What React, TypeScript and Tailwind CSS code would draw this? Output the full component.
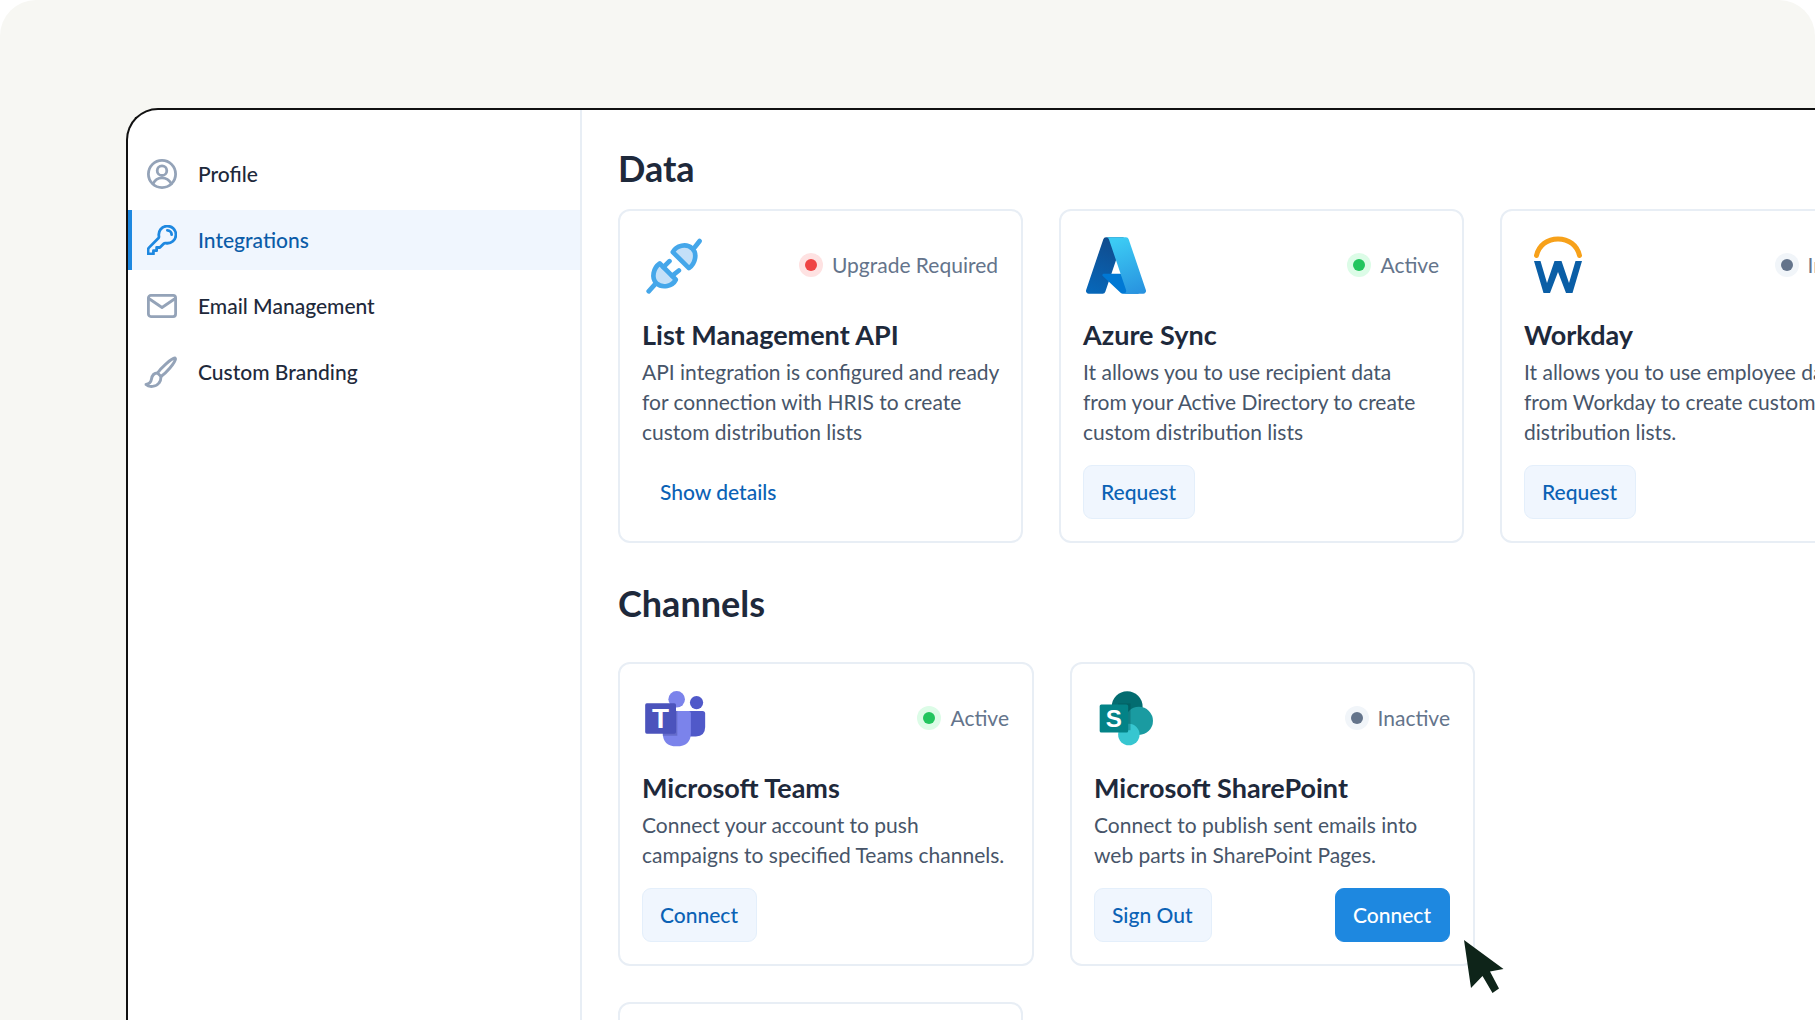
import React from "react";

const Profile = () => (
  <svg width="30" height="30" viewBox="0 0 30 30" fill="none" stroke="#94a3b8" strokeWidth="2.8" strokeLinecap="round">
    <circle cx="15" cy="15" r="13.6" />
    <circle cx="15" cy="11.7" r="4.8" />
    <path d="M6 24.8C8 20.5 11 18.8 15 18.8S22 20.5 24.5 24.8" />
  </svg>
);
const Key = () => (
  <svg width="30" height="30" viewBox="1.5 1.5 21 21" fill="none" stroke="#1e88e0" strokeWidth="1.95" strokeLinecap="round" strokeLinejoin="round">
    <path d="M15.75 5.25a3 3 0 0 1 3 3m3 0a6 6 0 0 1-7.029 5.912c-.563-.097-1.159.026-1.563.43L10.5 17.25H8.25v2.25H6v2.25H2.25v-2.818c0-.597.237-1.17.659-1.591l6.499-6.499c.404-.404.527-1 .43-1.563A6 6 0 1 1 21.75 8.25Z" />
  </svg>
);
const Mail = () => (
  <svg width="30" height="24" viewBox="0 0 30 24" fill="none" stroke="#94a3b8" strokeWidth="2.8" strokeLinejoin="round" strokeLinecap="round">
    <rect x="1.4" y="1.4" width="27.2" height="21.2" rx="2.5" />
    <path d="M1.8 4.5L15 13.5L28.2 4.5" />
  </svg>
);
const Brush = () => (
  <svg className="mr-[3px] shrink-0" width="33" height="33" viewBox="0 0 33 33" fill="none" stroke="#94a3b8" strokeWidth="2.9" strokeLinejoin="round" strokeLinecap="round">
    <path d="M31 2C27 2.5 17 12 13.5 17L17 20.5C22 17 31 7 31.5 3Z" />
    <path d="M13.5 17C9 17 8 20 7.5 23C7 26 5 28 2 28.5C5 31.5 12 31 15 27C17 24.5 17 22 17 20.5" />
  </svg>
);

const Plug = () => (
  <svg className="ml-[4px]" width="57" height="57" viewBox="50 50 170 170" fill="none" strokeLinecap="round" strokeLinejoin="round">
    <g stroke="#45a7ea" strokeWidth="14">
      <path d="M130 95C140 75 170 68 188 84C204 100 197 130 178 143Z" fill="#c4e0f8" />
      <path d="M196 80L210 62" />
      <path d="M139 177C129 197 99 204 81 188C65 172 72 142 91 129Z" fill="#c4e0f8" />
      <path d="M102 140L120 122M128 166L148 150M76 192L58 212" />
    </g>
  </svg>
);

const Azure = () => (
  <svg className="ml-[3px]" width="60" height="57" viewBox="4 6.5 88 83">
    <defs>
      <linearGradient id="az-a" x1="42" y1="6" x2="8" y2="92" gradientUnits="userSpaceOnUse">
        <stop stopColor="#114a8b" />
        <stop offset="1" stopColor="#0669bc" />
      </linearGradient>
      <linearGradient id="az-c" x1="46" y1="12" x2="76" y2="92" gradientUnits="userSpaceOnUse">
        <stop stopColor="#3ccbf4" />
        <stop offset="1" stopColor="#2892df" />
      </linearGradient>
    </defs>
    <path d="M33.338 6.544h26.038l-27.03 80.087a4.152 4.152 0 0 1-3.933 2.824H8.149a4.145 4.145 0 0 1-3.928-5.47L29.404 9.368a4.152 4.152 0 0 1 3.934-2.825z" fill="url(#az-a)" />
    <path d="M71.175 60.261h-41.29a1.911 1.911 0 0 0-1.305 3.309l26.532 24.764a4.171 4.171 0 0 0 2.846 1.121h23.38z" fill="#0078d4" />
    <path d="M66.595 9.364a4.145 4.145 0 0 0-3.928-2.82H33.648a4.146 4.146 0 0 1 3.928 2.82l25.184 74.62a4.146 4.146 0 0 1-3.928 5.472h29.02a4.146 4.146 0 0 0 3.927-5.472z" fill="url(#az-c)" />
  </svg>
);

const Workday = () => (
  <svg className="ml-[9px]" width="50" height="58" viewBox="0 0 50 58" fill="none">
    <path d="M3.5 19.5C6 9 14.5 3 25 3S44 9 46.5 19.5" stroke="#f7a11a" strokeWidth="5" strokeLinecap="round" />
    <path d="M1 25H7.5L14 47L21.5 25H28.5L36 47L42.5 25H49L39.5 57H33L25 36L17 57H10.5Z" fill="#0a5ea6" />
  </svg>
);

const Teams = () => (
  <svg className="ml-[2px]" width="63" height="57" viewBox="42 30 189 172">
    <circle cx="200" cy="68" r="20" fill="#5059c9" />
    <path d="M170 93H218Q226 93 226 101V142Q226 170 198 170H170Z" fill="#5059c9" />
    <circle cx="140" cy="58" r="25" fill="#7b83eb" />
    <path d="M104 93H176Q183 93 183 100V158Q183 200 140 200Q98 200 98 158V100Q98 93 104 93Z" fill="#7b83eb" />
    <path d="M98 93H142V168H98Z" fill="#3a3f8f" opacity="0.35" />
    <rect x="45" y="70" width="93" height="92" rx="5" fill="#4b53bc" />
    <text x="91" y="146" textAnchor="middle" fontFamily="'Liberation Sans',sans-serif" fontWeight="700" fontSize="84" fill="#ffffff">T</text>
  </svg>
);

const SharePoint = () => (
  <svg className="ml-[4px]" width="57" height="57" viewBox="40 30 170 170">
    <circle cx="127" cy="80" r="46" fill="#036c70" />
    <circle cx="162" cy="122" r="42" fill="#1a9ba1" />
    <circle cx="132" cy="163" r="32" fill="#37c6d0" />
    <path d="M100 70H137V150H100Z" fill="#024b4e" opacity="0.35" />
    <rect x="45" y="73" width="85" height="84" rx="5" fill="#038387" />
    <text x="87" y="141" textAnchor="middle" fontFamily="'Liberation Sans',sans-serif" fontWeight="700" fontSize="72" fill="#ffffff">S</text>
  </svg>
);

const Status = ({ tone, label }: { tone: "red" | "green" | "gray"; label: string }) => {
  const ring = tone === "red" ? "bg-[#fee2e2]" : tone === "green" ? "bg-[#dcfce7]" : "bg-[#f1f5f9]";
  const dot = tone === "red" ? "bg-[#ef4444]" : tone === "green" ? "bg-[#22c55e]" : "bg-[#64748b]";
  return (
    <div className="flex items-center gap-[9px]">
      <span className={"flex h-6 w-6 items-center justify-center rounded-full " + ring}>
        <span className={"h-3 w-3 rounded-full " + dot} />
      </span>
      <span className="whitespace-nowrap text-[21px] leading-[30px] text-[#64748b]">{label}</span>
    </div>
  );
};

const Btn = ({ kind = "soft", children }: { kind?: "soft" | "primary" | "ghost"; children: React.ReactNode }) => {
  const c =
    kind === "primary"
      ? "bg-[#1e88e0] text-white border-[#1e88e0]"
      : kind === "ghost"
        ? "bg-transparent text-[#0b62b5] border-transparent"
        : "bg-[#f0f6fe] text-[#0b62b5] border-[#e4effb]";
  return (
    <button className={"flex h-[54px] items-center rounded-[9px] border pl-[17px] pr-[18px] text-[21px] font-medium " + c}>
      {children}
    </button>
  );
};

const Card = ({
  w,
  icon,
  status,
  title,
  desc,
  actions,
}: {
  w: string;
  icon: React.ReactNode;
  status: React.ReactNode;
  title: string;
  desc: React.ReactNode;
  actions: React.ReactNode;
}) => (
  <div className={"flex shrink-0 flex-col rounded-[12px] border-2 border-[#e8eef5] bg-white pl-[22px] pr-[23px] pt-6 pb-[22px] " + w}>
    <div className="flex h-[60px] items-center justify-between">
      {icon}
      {status}
    </div>
    <h3 className="mt-[22px] whitespace-nowrap text-[27px] leading-[36px] font-bold text-[#1e293b]">{title}</h3>
    <p className="mt-1 whitespace-nowrap text-[21px] leading-[30px] text-[#475569]">{desc}</p>
    <div className="mt-[18px] flex items-center justify-between">{actions}</div>
  </div>
);

const NavItem = ({ icon, label, active }: { icon: React.ReactNode; label: string; active?: boolean }) => (
  <div
    className={
      "flex h-[60px] items-center gap-[21px] text-[21px] font-medium " +
      (active ? "border-l-4 border-[#1e88e0] bg-[#f0f6fe] pl-[15px] text-[#0b5ca8]" : "pl-[19px] text-[#1e293b]")
    }
  >
    <span className="flex w-[30px] shrink-0 justify-center">{icon}</span>
    {label}
  </div>
);

export default function App() {
  return (
    <div className="h-[1020px] w-full overflow-hidden bg-white font-[Lato,sans-serif]">
      <div className="h-full rounded-t-[36px] bg-[#f7f7f3] pl-[126px] pt-[108px]">
        <div className="flex h-[912px] w-[1800px] overflow-hidden rounded-tl-[32px] border-l-2 border-t-2 border-[#111111] bg-white">
          <aside className="flex w-[454px] shrink-0 flex-col gap-[6px] border-r-2 border-[#e8eef5] pt-[34px]">
            <NavItem icon={<Profile />} label="Profile" />
            <NavItem icon={<Key />} label="Integrations" active />
            <NavItem icon={<Mail />} label="Email Management" />
            <NavItem icon={<Brush />} label="Custom Branding" />
          </aside>
          <main className="min-w-0 flex-1 pl-9 pt-9">
            <h2 className="mb-[19px] text-[36px] leading-[44px] font-bold text-[#1e293b]">Data</h2>
            <div className="flex gap-9">
              <Card
                w="w-[405px]"
                icon={<Plug />}
                status={<Status tone="red" label="Upgrade Required" />}
                title="List Management API"
                desc={<>API integration is configured and ready<br />for connection with HRIS to create<br />custom distribution lists</>}
                actions={<Btn kind="ghost">Show details</Btn>}
              />
              <Card
                w="w-[405px]"
                icon={<Azure />}
                status={<Status tone="green" label="Active" />}
                title="Azure Sync"
                desc={<>It allows you to use recipient data<br />from your Active Directory to create<br />custom distribution lists</>}
                actions={<Btn>Request</Btn>}
              />
              <Card
                w="w-[405px]"
                icon={<Workday />}
                status={<Status tone="gray" label="Inactive" />}
                title="Workday"
                desc={<>It allows you to use employee data<br />from Workday to create custom<br />distribution lists.</>}
                actions={<Btn>Request</Btn>}
              />
            </div>
            <h2 className="mb-[37px] mt-[38px] text-[36px] leading-[44px] font-bold text-[#1e293b]">Channels</h2>
            <div className="flex gap-9">
              <Card
                w="w-[416px]"
                icon={<Teams />}
                status={<Status tone="green" label="Active" />}
                title="Microsoft Teams"
                desc={<>Connect your account to push<br />campaigns to specified Teams channels.</>}
                actions={<Btn>Connect</Btn>}
              />
              <div className="relative shrink-0">
                <Card
                  w="w-[405px]"
                  icon={<SharePoint />}
                  status={<Status tone="gray" label="Inactive" />}
                  title="Microsoft SharePoint"
                  desc={<>Connect to publish sent emails into<br />web parts in SharePoint Pages.</>}
                  actions={
                    <>
                      <Btn>Sign Out</Btn>
                      <Btn kind="primary">Connect</Btn>
                    </>
                  }
                />
                <svg className="absolute left-[393px] top-[277px]" width="42" height="56" viewBox="0 0 42 56">
                  <path d="M1 1L40.5 30L27 32.5L36 49.5L29.5 54L19.5 37L8 49Z" fill="#0e2419" />
                </svg>
              </div>
            </div>
            <div className="mt-9 h-[200px] w-[405px] rounded-[12px] border-2 border-[#e8eef5]" />
          </main>
        </div>
      </div>
    </div>
  );
}
